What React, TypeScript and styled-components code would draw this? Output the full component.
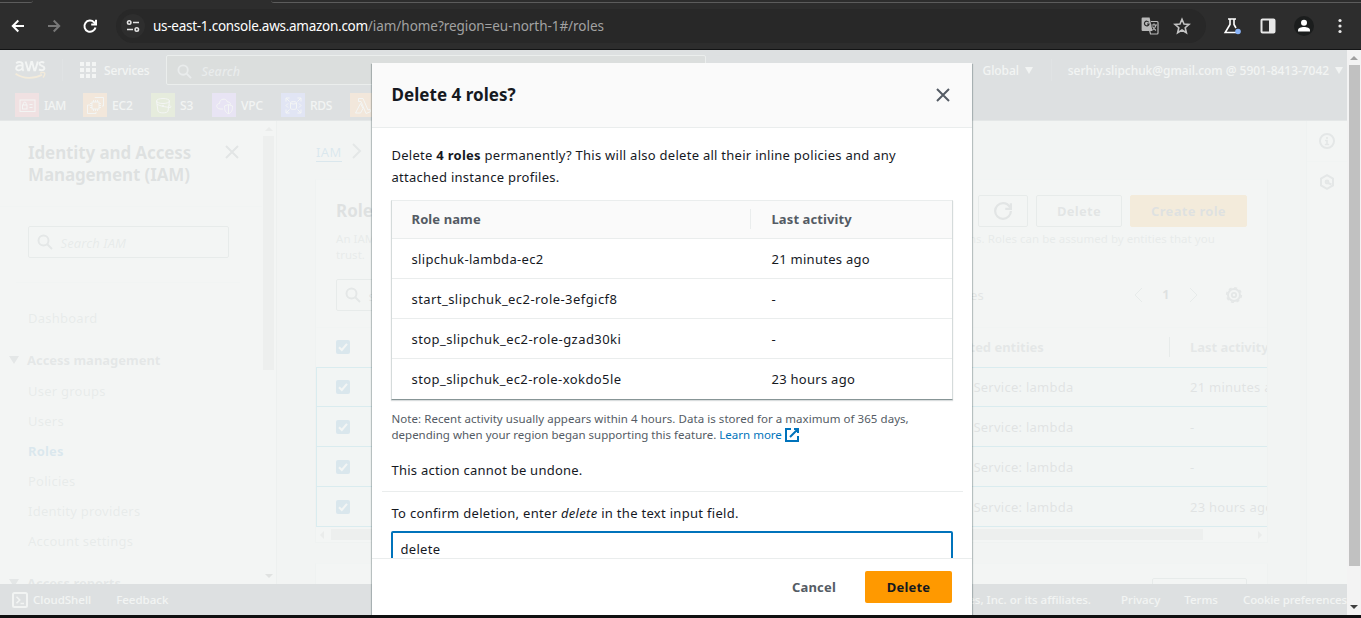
import React from "react";
import styled, { createGlobalStyle, css } from "styled-components";

const GlobalStyle = createGlobalStyle`
  *, *::before, *::after { box-sizing: border-box; }
  body {
    margin: 0;
    background: #101011;
    font-family: "Noto Sans", "Open Sans", sans-serif;
    font-size: 13px;
    letter-spacing: 0.25px;
    line-height: 22px;
    color: #16191f;
    overflow: hidden;
  }
  svg { display: block; flex: none; }
`;

const Window = styled.div`
  width: 1361px;
  height: 618px;
  display: flex;
  flex-direction: column;
  overflow: hidden;
  background: #101011;
`;

/* ---------- browser toolbar ---------- */

const BrowserBar = styled.header`
  height: 50px;
  flex: none;
  display: flex;
  flex-direction: column;
  background: #2d2d2d;
  border-bottom: 1px solid #131415;
`;

const TabStrip = styled.div`
  height: 9px;
  display: flex;
  justify-content: space-between;
`;

const TabEdge = styled.div<{ $width: number; $radius: string }>`
  width: ${(p) => p.$width}px;
  height: 3px;
  border-bottom: 1px solid #5c5c5c;
  border-radius: ${(p) => p.$radius};
`;

const BrowserTools = styled.div`
  height: 34px;
  display: flex;
  align-items: center;
`;

const NavButtons = styled.div`
  width: 116px;
  padding-left: 10px;
  display: flex;
  gap: 20px;
`;

const AddressBar = styled.div`
  width: 1090px;
  height: 34px;
  border-radius: 17px;
  background: #282828;
  display: flex;
  align-items: center;
  padding: 0 15px 0 5px;
`;

const SiteInfo = styled.div`
  width: 24px;
  height: 24px;
  border-radius: 50%;
  background: #2e2e2e;
  display: grid;
  place-items: center;
  margin-right: 8px;
`;

const Url = styled.div`
  flex: 1;
  color: #a2a2a2;
  font-size: 13.5px;
  letter-spacing: -0.05px;
  white-space: nowrap;
  b { font-weight: 400; color: #fff; letter-spacing: -0.27px; }
`;

const AddressIcons = styled.div`
  display: flex;
  gap: 14px;
`;

const BrowserActions = styled.div`
  display: flex;
  align-items: center;
  gap: 18px;
  margin-left: 16px;
`;

const Avatar = styled.div`
  width: 20px;
  height: 20px;
  border-radius: 50%;
  background: #1b1d1d;
`;

/* ---------- console frame ---------- */

const Viewport = styled.div`
  height: 565px;
  flex: none;
  display: flex;
`;

const Console = styled.div`
  width: 1347px;
  display: flex;
  flex-direction: column;
  position: relative;
  overflow: hidden;
  background: #f2f3f3;
`;

const TopNav = styled.nav`
  height: 71px;
  flex: none;
  background: #232f3e;
  border-bottom: 1px solid #687078;
  color: #f0f2f4;
  font-size: 12px;
  font-weight: 500;
  white-space: nowrap;
`;

const NavRow = styled.div`
  height: 40px;
  display: flex;
  align-items: center;
  padding-left: 15px;
`;

const NavRule = styled.i<{ $left: number; $right: number }>`
  width: 1px;
  height: 22px;
  background: #414d5c;
  margin: 0 ${(p) => p.$right}px 0 ${(p) => p.$left}px;
`;

const NavText = styled.span<{ $ls?: number; $left?: number; $right?: number }>`
  letter-spacing: ${(p) => p.$ls ?? 0}px;
  padding-top: 1px;
  margin: 0 ${(p) => p.$right ?? 0}px 0 ${(p) => p.$left ?? 0}px;
`;

const NavSearch = styled.div`
  width: 540px;
  height: 30px;
  margin: 0 276px 0 16px;
  border: 1px solid #aab7b8;
  border-radius: 2px;
  background: #0f141c;
  display: flex;
  align-items: center;
  gap: 10px;
  padding: 3px 0 0 10px;
  font-size: 12.5px;
  font-style: italic;
  letter-spacing: 0.1px;
  color: #95a0a8;
`;

const Caret = styled.i<{ $size?: number }>`
  width: 0;
  height: 0;
  border: ${(p) => p.$size ?? 4}px solid transparent;
  border-top: ${(p) => (p.$size ?? 4) + 3}px solid currentColor;
  border-bottom: 0;
  flex: none;
`;

const Favorites = styled.div`
  height: 30px;
  display: flex;
  padding: 3px 0 0 15px;
`;

const Favorite = styled.div<{ $width: number }>`
  width: ${(p) => p.$width}px;
  height: 24px;
  display: flex;
  align-items: center;
  gap: 5px;
`;

const ServiceTile = styled.span<{ $color: string }>`
  width: 24px;
  height: 24px;
  background: ${(p) => p.$color};
  display: grid;
  place-items: center;
`;

const Workspace = styled.div`
  height: 463px;
  flex: none;
  display: flex;
  overflow: hidden;
`;

/* ---------- side navigation ---------- */

const Sidebar = styled.aside`
  width: 277px;
  flex: none;
  display: flex;
  background: #fff;
  border-right: 1px solid #c4cccc;
`;

const SidebarBody = styled.div`
  width: 262px;
  overflow: hidden;
`;

const SidebarHead = styled.div`
  height: 86px;
  padding: 21px 22px 0 28px;
  border-bottom: 1px solid #eaeded;
  display: flex;
  justify-content: space-between;
  color: #30363e;
  h2 { margin: 0; font-size: 17px; line-height: 22px; letter-spacing: -0.12px; white-space: nowrap; }
  svg { margin-top: 2px; color: #545b64; }
`;

const Field = styled.div<{ $width: number }>`
  width: ${(p) => p.$width}px;
  height: 32px;
  border: 1px solid #879596;
  border-radius: 2px;
  background: #fff;
  display: flex;
  align-items: center;
  gap: 8px;
  padding: 2px 0 0 7.5px;
  color: #687078;
  svg { margin-top: -2px; }
  em { font-size: 13px; letter-spacing: 0.1px; color: #879596; }
`;

const SidebarSearch = styled.div`
  margin: 0 22px 0 16px;
  padding: 19px 0 24px 12px;
  height: 76px;
  border-bottom: 1px solid #eaeded;
`;

const SideLink = styled.div<{ $active?: boolean }>`
  height: 30px;
  padding-left: 28px;
  line-height: 30px;
  color: #879596;
  letter-spacing: 0.24px;
  ${(p) =>
    p.$active &&
    css`
      color: #0073bb;
      font-weight: 700;
      letter-spacing: 0.15px;
    `}
`;

const SideGroup = styled.div`
  height: 32px;
  display: flex;
  align-items: center;
  gap: 8px;
  padding-left: 9px;
  font-weight: 700;
  letter-spacing: -0.02px;
  color: #687078;
`;

const SideSpacer = styled.div<{ $height: number }>`
  height: ${(p) => p.$height}px;
`;

const ScrollTrack = styled.div`
  width: 14px;
  display: flex;
  flex-direction: column;
  align-items: center;
  background: #f3f3f3;
`;

const SideScrollTrack = styled(ScrollTrack)`
  background: #f8f8f8;
  padding-right: 1px;
`;

const ScrollThumb = styled.div<{ $height: number }>`
  width: 11px;
  height: ${(p) => p.$height}px;
  background: #c1c1c1;
`;

const ScrollArrow = styled.i<{ $up?: boolean; $dark?: boolean; $space: string }>`
  width: 0;
  height: 0;
  border: 4px solid transparent;
  color: ${(p) => (p.$dark ? "#404040" : "#a0a0a0")};
  ${(p) =>
    p.$up
      ? "border-top: 0; border-bottom-color: currentColor;"
      : "border-bottom: 0; border-top-color: currentColor;"}
  margin: ${(p) => p.$space};
`;

/* ---------- roles page ---------- */

const Main = styled.main`
  width: 1029px;
  padding-left: 38px;
`;

const Breadcrumb = styled.div`
  height: 58px;
  padding: 2px 0 0 1px;
  display: flex;
  align-items: center;
  gap: 7px;
  color: #687078;
  a {
    line-height: 18px;
    color: #0073bb;
    border-bottom: 1px solid #0073bb;
    margin-top: 3px;
    letter-spacing: 0.4px;
  }
`;

const Panel = styled.section`
  width: 953px;
  background: #fafafa;
  border: 1px solid #d5dbdb;
  border-top-color: #eaeded;
  margin-bottom: 20px;
`;

const PanelTop = styled.div`
  padding: 15px 20px 0;
`;

const TitleRow = styled.div`
  height: 32px;
  display: flex;
  align-items: center;
  gap: 8px;
  h1 { margin: 0; flex: 1; font-size: 17px; letter-spacing: 0; color: #30363e; }
`;

const PageButton = styled.button<{ $width: number; $primary?: boolean }>`
  width: ${(p) => p.$width}px;
  height: 32px;
  padding: 0;
  display: grid;
  place-items: center;
  border: 1px solid ${(p) => (p.$primary ? "#ff9900" : "#879596")};
  border-radius: 2px;
  background: ${(p) => (p.$primary ? "#ff9900" : "#fff")};
  color: ${(p) => (p.$primary ? "#30363e" : "#545b64")};
  font: 700 13px "Noto Sans", sans-serif;
  letter-spacing: 0.3px;
`;

const Description = styled.p`
  margin: 4px 0 16px;
  font-size: 11.5px;
  line-height: 16px;
  letter-spacing: 0.03px;
  white-space: nowrap;
  color: #879596;
`;

const FilterRow = styled.div`
  height: 48px;
  display: flex;
  color: #545b64;
`;

const Matches = styled.span`
  width: 128px;
  text-align: right;
  line-height: 32px;
  margin-right: 146px;
`;

const Pager = styled.div`
  width: 72px;
  height: 32px;
  display: flex;
  align-items: center;
  justify-content: space-between;
  color: #879596;
  b { font-size: 12.5px; color: #30363e; }
`;

const Preferences = styled.div`
  height: 32px;
  margin-left: 23px;
  display: flex;
  align-items: center;
  color: #687078;
`;

const GridRow = styled.div<{ $head?: boolean; $first?: boolean }>`
  height: 40px;
  display: grid;
  grid-template-columns: 606px 248px 1fr;
  align-items: center;
  padding-left: 19px;
  white-space: nowrap;
  overflow: hidden;
  color: #414750;
  background: #f1faff;
  border: 0 solid #00a1c9;
  border-width: ${(p) => (p.$first ? 1 : 0)}px 0 1px 1px;
  ${(p) =>
    p.$head &&
    css`
      background: #fafafa;
      font-weight: 700;
      letter-spacing: -0.03px;
      color: #687078;
      border-color: #eaeded transparent transparent;
      border-top-width: 1px;
    `}
`;

const LastColumn = styled.span<{ $ruled?: boolean }>`
  line-height: 20px;
  ${(p) =>
    p.$ruled &&
    css`
      border-left: 1px solid #879596;
      padding-left: 20px;
      margin-left: -21px;
    `}
`;

const CheckBox = styled.span`
  width: 14px;
  height: 14px;
  border-radius: 2px;
  background: #0073bb;
  display: block;
`;

const HScroll = styled.div`
  height: 15px;
  display: flex;
  align-items: center;
  padding: 0 4px;
  color: #a0a0a0;
`;

const HThumb = styled.div`
  width: 872px;
  height: 11px;
  margin: 0 55px 0 7px;
  background: #c1c1c1;
`;

const HArrow = styled.i<{ $left?: boolean }>`
  border: 4px solid transparent;
  ${(p) =>
    p.$left
      ? "border-left: 0; border-right-color: currentColor;"
      : "border-right: 0; border-left-color: currentColor;"}
`;

const NextPanelTop = styled.div`
  display: flex;
  justify-content: flex-end;
  padding: 14px 20px;
`;

const Tools = styled.aside`
  width: 41px;
  border-left: 1px solid #d5dbdb;
  background: #fff;
  color: #687078;
`;

const ToolSlot = styled.div`
  height: 40px;
  display: grid;
  place-items: center;
  &:first-child { border-bottom: 1px solid #eaeded; height: 41px; }
`;

const FooterBar = styled.footer`
  height: 31px;
  flex: none;
  background: #232f3e;
  color: #f0f2f4;
  font-size: 11.5px;
  font-weight: 500;
  display: flex;
  align-items: center;
  padding-left: 12px;
  white-space: nowrap;
`;

const FooterLinks = styled.div`
  flex: 1;
  display: flex;
  justify-content: flex-end;
`;

const FooterItem = styled.span<{ $gap: number; $ls?: number }>`
  margin-left: ${(p) => p.$gap}px;
  letter-spacing: ${(p) => p.$ls ?? 0}px;
`;

/* ---------- confirmation dialog ---------- */

const Overlay = styled.div`
  position: absolute;
  inset: 0;
  display: flex;
  justify-content: center;
  padding: 13px 3px 0 0;
  background: rgba(242, 244, 243, 0.9);
`;

const Modal = styled.div`
  width: 600px;
  height: 552px;
  display: flex;
  flex-direction: column;
  background: #fff;
  box-shadow: 0 1px 1px rgba(0, 28, 36, 0.3), 1px 1px 1px rgba(0, 28, 36, 0.2),
    -1px 1px 1px rgba(0, 28, 36, 0.2);
`;

const ModalHead = styled.div`
  height: 65px;
  flex: none;
  display: flex;
  align-items: center;
  justify-content: space-between;
  padding: 0 21px 0 19.5px;
  background: #fafafa;
  border-bottom: 1px solid #eaeded;
  color: #545b64;
  h2 { margin: 0; font-size: 17px; color: #16191f; letter-spacing: 0.04px; }
`;

const ModalBody = styled.div`
  height: 430px;
  flex: none;
  overflow: hidden;
  padding: 16px 19px 0;
  white-space: nowrap;
`;

const Line = styled.p<{ $top?: number; $ls?: number }>`
  margin: ${(p) => p.$top ?? 0}px 0 0;
  padding-left: 0.5px;
  letter-spacing: ${(p) => p.$ls ?? 0}px;
`;

const RolesTable = styled.div`
  margin: 12px 0 0;
  height: 200px;
  border: 1px solid #d5dbdb;
  border-top-color: #eaeded;
  border-bottom-color: #879596;
  box-shadow: 0 1px 1px rgba(0, 28, 36, 0.15);
`;

const RoleRow = styled.div<{ $head?: boolean }>`
  height: ${(p) => (p.$head ? 38 : 40)}px;
  display: grid;
  grid-template-columns: 360px 1fr;
  align-items: center;
  padding-left: 19.5px;
  border-bottom: 1px solid #eaeded;
  &:last-child { border-bottom: 0; }
  ${(p) =>
    p.$head &&
    css`
      background: #fafafa;
      color: #545b64;
      font-weight: 700;
      padding-bottom: 1px;
    `}
`;

const RoleCell = styled.span<{ $ls?: number; $ruled?: boolean }>`
  letter-spacing: ${(p) => p.$ls ?? 0.1}px;
  line-height: 20px;
  ${(p) =>
    p.$ruled &&
    css`
      border-left: 1px solid #eaeded;
      margin-left: -22px;
      padding-left: 21px;
    `}
`;

const Note = styled.div`
  margin: 11px 0 0;
  font-size: 11.5px;
  color: #545b64;
`;

const NoteLine = styled.p<{ $ls: number }>`
  margin: 0;
  padding-left: 0.5px;
  height: 16px;
  line-height: 16px;
  letter-spacing: ${(p) => p.$ls}px;
`;

const LearnMore = styled.a`
  color: #0073bb;
  svg { display: inline-block; vertical-align: -4px; margin-left: 2px; }
`;

const Divider = styled.hr`
  height: 1px;
  border: 0;
  margin: 10px -10px 0 -9px;
  background: #eaeded;
`;

const ConfirmInput = styled.input`
  display: block;
  width: 562px;
  height: 36px;
  margin: 7px 0 0;
  padding: 0 7.5px;
  border: 2px solid #0073bb;
  border-radius: 2px;
  outline: none;
  font: inherit;
  letter-spacing: 0.3px;
  color: #16191f;
`;

const ModalFoot = styled.div`
  flex: 1;
  border-top: 1px solid #eaeded;
  padding: 12px 20px 0;
  display: flex;
  justify-content: flex-end;
  gap: 9px;
`;

const ModalButton = styled.button<{ $primary?: boolean }>`
  width: ${(p) => (p.$primary ? 87 : 84)}px;
  height: 32px;
  padding: 0;
  border: 0;
  border-radius: 2px;
  background: ${(p) => (p.$primary ? "#ff9900" : "transparent")};
  color: ${(p) => (p.$primary ? "#16191f" : "#545b64")};
  font: 700 13px "Noto Sans", sans-serif;
  letter-spacing: 0.2px;
`;

/* ---------- icons ---------- */

type IconProps = { size?: number; width?: number; children: React.ReactNode; box?: number };

const Icon = ({ size = 16, width = 2, box = 16, children }: IconProps) => (
  <svg width={size} height={size} viewBox={`0 0 ${box} ${box}`} fill="none" stroke="currentColor" strokeWidth={width}>
    {children}
  </svg>
);

const SearchIcon = ({ size = 16 }: { size?: number }) => (
  <Icon size={size}>
    <circle cx="6.500" cy="6.500" r="5" />
    <path d="M10.200 10.200L15 15" />
  </Icon>
);

const CloseIcon = () => (
  <Icon>
    <path d="M2 2l12 12M14 2L2 14" />
  </Icon>
);

const Check = () => (
  <CheckBox>
    <Icon size={14} box={14}>
      <path d="M3 7.200l2.800 2.800L11 3.800" stroke="#fff" />
    </Icon>
  </CheckBox>
);

const Chevron = ({ left, width = 1.6 }: { left?: boolean; width?: number }) => (
  <Icon width={width}>
    <path d={left ? "M12 1L5 8l7 7" : "M4 1l7 7-7 7"} />
  </Icon>
);

const GearIcon = () => (
  <Icon size={18} box={18}>
    <circle cx="9" cy="9" r="6" />
    <circle cx="9" cy="9" r="7.300" strokeWidth="1.600" strokeDasharray="3 2.730" />
    <circle cx="9" cy="9" r="2.200" strokeWidth="1.800" />
  </Icon>
);

const AwsLogo = () => (
  <svg width="32" height="22" viewBox="0 0 32 22" fill="none">
    <g stroke="#fff" strokeWidth="1.900">
      <path d="M1.200 4.200C3 2.600 7.600 2.400 7.600 5.400v4c0 1 .4 1.800 1 2.300M7.600 6.600C4.600 6 1.200 6.400 1.200 9.200c0 3 5 2.800 6.400-.4" />
      <path d="M10.600 2.400l2.600 9h.9L16.300 3h.8l2.200 8.400h.9l2.600-9" />
      <path d="M29.200 3.700c-1.800-1.100-4.800-.9-4.800 1.100 0 2.600 5 1.600 5 4.300 0 2.500-3.600 2.500-5.400 1.300" />
    </g>
    <path d="M.6 14.800c8 5.400 18.600 5.200 26.400.9" stroke="#ff9900" strokeWidth="1.800" />
    <path d="M25 14.200c1.800-.8 4-.8 4.600-.2s-.2 3-1.700 4.500" stroke="#ff9900" strokeWidth="1.400" />
  </svg>
);

const services: { name: string; color: string; width: number; ls: number; art: React.ReactNode }[] = [
  {
    name: "IAM", color: "#dd344c", width: 68, ls: -0.4,
    art: (
      <>
        <rect x="1" y="3" width="15" height="11.500" />
        <rect x="3.500" y="8" width="4.500" height="4" />
        <path d="M4.400 8V6.500a1.400 1.400 0 0 1 2.800 0V8M10.500 7.500h3M10.500 10.500h3" />
      </>
    ),
  },
  {
    name: "EC2", color: "#ed7100", width: 68, ls: -0.1,
    art: (
      <>
        <rect x="5" y="5" width="7" height="7" />
        <path d="M6.500 5V3M8.500 5V3M10.500 5V3M6.500 14v-2M8.500 14v-2M10.500 14v-2M5 6.500H3M5 8.500H3M5 10.500H3M14 6.500h-2M14 8.500h-2M14 10.500h-2M8 1V.5h8.500V9H15M3 8H.5v8.500H9V15" />
      </>
    ),
  },
  {
    name: "S3", color: "#7aa116", width: 61, ls: -0.2,
    art: (
      <>
        <ellipse cx="8" cy="4" rx="6.500" ry="2.500" />
        <path d="M1.500 4L3 14c.5 2.500 9.500 2.500 10 0l1.500-10M2 7c2 2 9 3 13 3.500 2 0 .5-2-1-2.500" />
        <circle cx="8" cy="9" r=".7" />
      </>
    ),
  },
  {
    name: "VPC", color: "#8c4fff", width: 69, ls: -0.1,
    art: (
      <>
        <path d="M7 12H4C-.5 11.500 0 6.500 3.500 6.500 3.500 1.500 10 .5 11.500 5c2 0 3 .8 3 2.500" />
        <path d="M12.500 7.500l4 1.500c0 4-.5 6-4 8-3.500-2-4-4-4-8l4-1.500zM12.500 7.500V17" />
      </>
    ),
  },
  {
    name: "RDS", color: "#4d5bff", width: 69, ls: -0.3,
    art: (
      <>
        <path d="M1 4.500V1h3.500M1 1l3.500 3.500M12.500 1H16v3.500M16 1l-3.500 3.500M1 12.500V16h3.500M1 16l3.500-3.500M16 12.500V16h-3.500M16 16l-3.500-3.500" />
        <ellipse cx="8.500" cy="5.800" rx="3" ry="1.200" />
        <path d="M5.500 5.800v5.400c0 1.600 6 1.600 6 0V5.800M3 6.500l-2 2 2 2M14 6.500l2 2-2 2" />
      </>
    ),
  },
  {
    name: "Lambda", color: "#ed7100", width: 80, ls: 0,
    art: <path d="M1.500 16L6.500 6.500l2.500 5L6.500 16zM4.500 1.500h4.500l5 11.500 2-.8.500 2.500-4.500 1.800L7 4.500H4.500z" />,
  },
];

const roles = [
  { name: "slipchuk-lambda-ec2", last: "21 minutes ago", ls: 0.34 },
  { name: "start_slipchuk_ec2-role-3efgicf8", last: "-", ls: 0.44 },
  { name: "stop_slipchuk_ec2-role-gzad30ki", last: "-", ls: 0.44 },
  { name: "stop_slipchuk_ec2-role-xokdo5le", last: "23 hours ago", ls: 0.42 },
];

const sideLinks = ["User groups", "Users", "Roles", "Policies", "Identity providers", "Account settings"];

/* ---------- sections ---------- */

const BrowserToolbar = () => (
  <BrowserBar>
    <TabStrip>
      <TabEdge $width={33} $radius="0 0 8px 0" />
      <TabEdge $width={1090} $radius="0 0 0 8px" />
    </TabStrip>
    <BrowserTools>
      <NavButtons>
        <Icon><path d="M14 8H3M8.300 2.500L2.800 8l5.500 5.500" stroke="#fff" /></Icon>
        <Icon><path d="M2 8h11M7.700 2.500L13.200 8l-5.500 5.500" stroke="#777" /></Icon>
        <Icon>
          <path d="M13.500 9.500A5.600 5.600 0 1 1 12 4.200l1.500 1.500" stroke="#fff" />
          <path d="M14 1.800v4.800H9.200" stroke="#fff" />
        </Icon>
      </NavButtons>
      <AddressBar>
        <SiteInfo>
          <Icon size={14} box={14} width={1.6}>
            <g stroke="#e3e3e3">
              <circle cx="3.200" cy="3.500" r="1.700" />
              <path d="M7 3.500h6M1 10.500h6" />
              <circle cx="10.800" cy="10.500" r="1.700" />
            </g>
          </Icon>
        </SiteInfo>
        <Url><b>us-east-1.console.aws.amazon.com</b>/iam/home?region=eu-north-1#/roles</Url>
        <AddressIcons>
          <Icon size={18} box={18} width={1.2}>
            <path d="M.6 1.600a1 1 0 0 1 1-1h7L11.500 14H1.600a1 1 0 0 1-1-1z" fill="#b8b8b8" stroke="none" />
            <path d="M7.700 5.300A2.300 2.300 0 1 0 8 7H6" stroke="#2a2a2a" />
            <path d="M10 4.500h6a1 1 0 0 1 1 1V16a1 1 0 0 1-1 1H9.500l-1-4" stroke="#b8b8b8" />
            <path d="M10.500 8h5.500M13 6.500V8M15 8c-.5 2.500-2 4-3.500 5M11.500 9.500c.8 1.500 2 3 3.500 4" stroke="#b8b8b8" />
          </Icon>
          <Icon size={18} box={18} width={1.6}>
            <path d="M9 2.300l2 4.700 5 .4-3.800 3.300 1.200 5L9 13l-4.400 2.700 1.200-5L2 7.400 7 7z" stroke="#c4c4c4" />
          </Icon>
        </AddressIcons>
      </AddressBar>
      <BrowserActions>
        <Icon size={20} box={20} width={1.6}>
          <path d="M6 3h8M8 3v5.500L3.200 16.500h11M12 3v5.500l2 3.500" stroke="#fff" />
          <circle cx="16" cy="15.500" r="2.800" fill="#8ab4f8" stroke="none" />
        </Icon>
        <Icon>
          <rect x="1.500" y="1.500" width="13" height="13" rx="1" stroke="#e8e8e8" />
          <path d="M10 2h4v12h-4z" fill="#e8e8e8" stroke="#e8e8e8" />
        </Icon>
        <Avatar>
          <svg width="20" height="20" viewBox="0 0 20 20" fill="#fff">
            <circle cx="10" cy="6.800" r="3" />
            <path d="M4 15.500v-1.200c0-4.300 12-4.300 12 0v1.200z" />
          </svg>
        </Avatar>
        <svg width="18" height="18" viewBox="0 0 18 18" fill="#e8e8e8">
          <circle cx="8" cy="3.500" r="1.600" />
          <circle cx="8" cy="9" r="1.600" />
          <circle cx="8" cy="14.500" r="1.600" />
        </svg>
      </BrowserActions>
    </BrowserTools>
  </BrowserBar>
);

const ConsoleNav = () => (
  <TopNav>
    <NavRow>
      <AwsLogo />
      <NavRule $left={15} $right={17} />
      <svg width="16" height="16" viewBox="0 0 16 16" fill="#fff">
        {[0, 6, 12].map((y) => [0, 6, 12].map((x) => <rect key={`${x}-${y}`} x={x} y={y} width="4" height="4" />))}
      </svg>
      <NavText $ls={-0.15} $left={8}>Services</NavText>
      <NavSearch>
        <SearchIcon size={15} />
        Search
      </NavSearch>
      <NavText $ls={-0.1} $left={1} $right={6}>Global</NavText>
      <Caret />
      <NavRule $left={18} $right={16} />
      <NavText $ls={-0.04} $right={6}>serhiy.slipchuk@gmail.com @ 5901-8413-7042</NavText>
      <Caret />
    </NavRow>
    <Favorites>
      {services.map((s) => (
        <Favorite key={s.name} $width={s.width}>
          <ServiceTile $color={s.color}>
            <svg width="17" height="17" viewBox="0 0 17 17" fill="none" stroke="#fff" strokeWidth="1">{s.art}</svg>
          </ServiceTile>
          <NavText $ls={s.ls}>{s.name}</NavText>
        </Favorite>
      ))}
    </Favorites>
  </TopNav>
);

const SideNavigation = () => (
  <Sidebar>
    <SidebarBody>
      <SidebarHead>
        <h2>Identity and Access<br />Management (IAM)</h2>
        <CloseIcon />
      </SidebarHead>
      <SidebarSearch>
        <Field $width={201}><SearchIcon /><em>Search IAM</em></Field>
      </SidebarSearch>
      <SideSpacer $height={20} />
      <SideLink>Dashboard</SideLink>
      <SideSpacer $height={11} />
      <SideGroup><Caret $size={5} />Access management</SideGroup>
      {sideLinks.map((l) => <SideLink key={l} $active={l === "Roles"}>{l}</SideLink>)}
      <SideSpacer $height={11} />
      <SideGroup><Caret $size={5} />Access reports</SideGroup>
    </SidebarBody>
    <SideScrollTrack>
      <ScrollArrow $up $space="6px 0 5px" />
      <ScrollThumb $height={234} />
      <ScrollArrow $dark $space="auto 0 6px" />
    </SideScrollTrack>
  </Sidebar>
);

const RolesPage = () => (
  <Main>
    <Breadcrumb><a>IAM</a><Chevron width={2} /></Breadcrumb>
    <Panel>
      <PanelTop>
        <TitleRow>
          <h1>Roles</h1>
          <PageButton $width={50}>
            <Icon size={18}>
              <path d="M15 8c0 3.870-3.130 7-7 7s-7-3.130-7-7 3.130-7 7-7c2.790 0 5.200 1.630 6.330 4" />
              <path d="M15 1v5h-5" />
            </Icon>
          </PageButton>
          <PageButton $width={86}>Delete</PageButton>
          <PageButton $width={117} $primary>Create role</PageButton>
        </TitleRow>
        <Description>
          An IAM role is an identity you can create that has specific permissions with credentials that are valid for short durations. Roles can be assumed by entities that you
          <br />
          trust.
        </Description>
        <FilterRow>
          <Field $width={520}><SearchIcon />slipchuk</Field>
          <Matches>4 matches</Matches>
          <Pager>
            <Chevron left width={1} />
            <b>1</b>
            <Chevron width={1} />
          </Pager>
          <Preferences><GearIcon /></Preferences>
        </FilterRow>
      </PanelTop>
      <GridRow $head>
        <Check />
        <span>Trusted entities</span>
        <LastColumn $ruled>Last activity</LastColumn>
      </GridRow>
      {roles.map((r, i) => (
        <GridRow key={r.name} $first={i === 0}>
          <Check />
          <span>AWS Service: lambda</span>
          <LastColumn>{r.last}</LastColumn>
        </GridRow>
      ))}
      <HScroll><HArrow $left /><HThumb /><HArrow /></HScroll>
    </Panel>
    <Panel>
      <NextPanelTop><PageButton $width={95} /></NextPanelTop>
    </Panel>
  </Main>
);

const ToolsRail = () => (
  <Tools>
    <ToolSlot>
      <Icon>
        <circle cx="8" cy="8" r="7" />
        <path d="M8 4v2M6 7.500h2v4M5.800 11.500h4.400" strokeWidth="1.600" />
      </Icon>
    </ToolSlot>
    <ToolSlot>
      <Icon>
        <path d="M8 1.200l6 3.400v6.800l-6 3.400-6-3.400V4.600z" />
        <circle cx="8" cy="8" r="1.400" />
        <path d="M9 9l3.500 1.500" />
      </Icon>
    </ToolSlot>
  </Tools>
);

const ConsoleFooter = () => (
  <FooterBar>
    <Icon>
      <rect x="1" y="1" width="14" height="14" rx="1.500" />
      <path d="M4.500 4.800L7.700 8l-3.200 3.200M8.500 11.500h3.500" strokeWidth="1.600" />
    </Icon>
    <FooterItem $gap={5}>CloudShell</FooterItem>
    <FooterItem $gap={25}>Feedback</FooterItem>
    <FooterLinks>
      <FooterItem $gap={0}>© 2024, Amazon Web Services, Inc. or its affiliates.</FooterItem>
      <FooterItem $gap={30}>Privacy</FooterItem>
      <FooterItem $gap={24}>Terms</FooterItem>
      <FooterItem $gap={25} $ls={-0.1}>Cookie preferences</FooterItem>
    </FooterLinks>
  </FooterBar>
);

const DeleteDialog = () => (
  <Overlay>
    <Modal role="dialog">
      <ModalHead>
        <h2>Delete 4 roles?</h2>
        <CloseIcon />
      </ModalHead>
      <ModalBody>
        <Line $ls={0.27}>
          Delete <b>4 roles</b> permanently? This will also delete all their inline policies and any
          <br />
          attached instance profiles.
        </Line>
        <RolesTable>
          <RoleRow $head>
            <RoleCell>Role name</RoleCell>
            <RoleCell $ruled>Last activity</RoleCell>
          </RoleRow>
          {roles.map((r) => (
            <RoleRow key={r.name}>
              <RoleCell $ls={r.ls}>{r.name}</RoleCell>
              <RoleCell $ls={0.27}>{r.last}</RoleCell>
            </RoleRow>
          ))}
        </RolesTable>
        <Note>
          <NoteLine $ls={0.05}>
            Note: Recent activity usually appears within 4 hours. Data is stored for a maximum of 365 days,
          </NoteLine>
          <NoteLine $ls={0}>
            depending when your region began supporting this feature.{" "}
            <LearnMore>
              Learn more
              <Icon><path d="M10 2h4v4M6 10l8-8M14 9v5H2V2h5" /></Icon>
            </LearnMore>
          </NoteLine>
        </Note>
        <Line $top={16} $ls={0.24}>This action cannot be undone.</Line>
        <Divider />
        <Line $top={10} $ls={0.3}>To confirm deletion, enter <i>delete</i> in the text input field.</Line>
        <ConfirmInput defaultValue="delete" />
      </ModalBody>
      <ModalFoot>
        <ModalButton>Cancel</ModalButton>
        <ModalButton $primary>Delete</ModalButton>
      </ModalFoot>
    </Modal>
  </Overlay>
);

export default function App() {
  return (
    <Window>
      <GlobalStyle />
      <BrowserToolbar />
      <Viewport>
        <Console>
          <ConsoleNav />
          <Workspace>
            <SideNavigation />
            <RolesPage />
            <ToolsRail />
          </Workspace>
          <ConsoleFooter />
          <DeleteDialog />
        </Console>
        <ScrollTrack>
          <ScrollArrow $up $space="6px 0 5px" />
          <ScrollThumb $height={501} />
          <ScrollArrow $dark $space="auto 0 6px" />
        </ScrollTrack>
      </Viewport>
    </Window>
  );
}
